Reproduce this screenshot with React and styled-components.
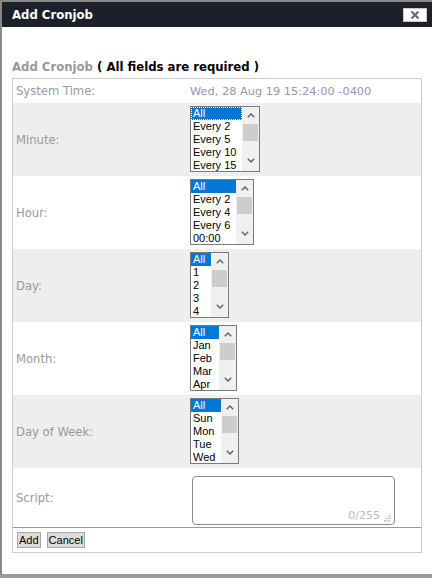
import React from "react";
import styled, { createGlobalStyle } from "styled-components";

const Global = createGlobalStyle`
  html, body {
    margin: 0;
    padding: 0;
    background: #9a9a9a;
  }
  body {
    font-family: "DejaVu Sans", Verdana, sans-serif;
  }
`;

const fields = [
	{ label: "Minute:", width: 70, items: ["All", "Every 2", "Every 5", "Every 10", "Every 15"], focus: true },
	{ label: "Hour:", width: 64, items: ["All", "Every 2", "Every 4", "Every 6", "00:00"] },
	{ label: "Day:", width: 39, items: ["All", "1", "2", "3", "4"] },
	{ label: "Month:", width: 47, items: ["All", "Jan", "Feb", "Mar", "Apr"] },
	{ label: "Day of Week:", width: 49, items: ["All", "Sun", "Mon", "Tue", "Wed"] },
];

const Chevron = ({ down }) => (
	<svg width="8" height="5" viewBox="0 0 8 5">
		<polyline
			points={down ? "0.8,0.8 4,4 7.2,0.8" : "0.8,4.2 4,1 7.2,4.2"}
			fill="none"
			stroke="#606060"
			strokeWidth="1.4"
		/>
	</svg>
);

const ListBox = ({ width, items, focus }) => (
	<Box $w={width}>
		<Options>
			{items.map((it, i) => (
				<Option key={it} $selected={i === 0} $focus={focus && i === 0}>
					{it}
				</Option>
			))}
		</Options>
		<ScrollBar>
			<Arrow>
				<Chevron />
			</Arrow>
			<Thumb />
			<Track />
			<Arrow $bottom>
				<Chevron down />
			</Arrow>
		</ScrollBar>
	</Box>
);

const App = () => {
	return (
		<>
			<Global />
			<Dialog>
				<TitleBar>
					<h1>Add Cronjob</h1>
					<CloseBtn aria-label="Close">
						<svg width="10" height="10" viewBox="0 0 10 10">
							<path d="M1.5 1.5 L8.5 8.5 M8.5 1.5 L1.5 8.5" stroke="#6b6b6b" strokeWidth="2.2" />
						</svg>
					</CloseBtn>
				</TitleBar>
				<Content>
					<Heading>
						<span>Add Cronjob</span> ( All fields are required )
					</Heading>
					<Table>
						<Row>
							<Label>System Time:</Label>
							<Value>Wed, 28 Aug 19 15:24:00 -0400</Value>
						</Row>
						{fields.map((f, i) => (
							<Row key={f.label} $shade={i % 2 === 0}>
								<Label>{f.label}</Label>
								<Field>
									<ListBox width={f.width} items={f.items} focus={f.focus} />
								</Field>
							</Row>
						))}
						<Row>
							<Label>Script:</Label>
							<Field $script>
								<ScriptWrap>
									<textarea />
									<Counter>
										0/255
										<svg width="7" height="7" viewBox="0 0 7 7">
											<rect x="5" y="0" width="1.4" height="1.4" fill="#aaa" />
											<rect x="2.5" y="2.6" width="1.4" height="1.4" fill="#aaa" />
											<rect x="5" y="2.6" width="1.4" height="1.4" fill="#aaa" />
											<rect x="0" y="5.2" width="1.4" height="1.4" fill="#aaa" />
											<rect x="2.5" y="5.2" width="1.4" height="1.4" fill="#aaa" />
											<rect x="5" y="5.2" width="1.4" height="1.4" fill="#aaa" />
										</svg>
									</Counter>
								</ScriptWrap>
							</Field>
						</Row>
						<Actions>
							<Button type="button">Add</Button>
							<Button type="button">Cancel</Button>
						</Actions>
					</Table>
				</Content>
			</Dialog>
		</>
	);
};

const Dialog = styled.div`
	width: 430px;
	background: #fff;
	border-top: 2px solid #888;
	border-left: 2px solid #888;
`;

const TitleBar = styled.div`
	height: 25px;
	background: #1d2028;
	display: flex;
	align-items: center;
	justify-content: space-between;
	padding: 0 5px 0 10px;
	h1 {
		margin: 0;
		color: #fff;
		font-size: 11.7px;
		font-weight: 700;
		line-height: 14px;
	}
`;

const CloseBtn = styled.button`
	width: 24px;
	height: 14px;
	margin-top: 1px;
	padding: 0;
	background: #fff;
	border: 1px solid #c8c8c8;
	display: flex;
	align-items: center;
	justify-content: center;
	cursor: pointer;
`;

const Content = styled.div`
	padding: 33px 9px 21px 10px;
`;

const Heading = styled.h2`
	margin: 0 0 4px;
	font-size: 11.7px;
	line-height: 14px;
	font-weight: 700;
	color: #000;
	span {
		color: #999;
	}
`;

const Table = styled.div`
	width: 408px;
	border: 1px solid #ccc;
`;

const Row = styled.div`
	display: grid;
	grid-template-columns: 174px 1fr;
	align-items: center;
	background: ${(p) => (p.$shade ? "#eee" : "#fff")};
`;

const Label = styled.div`
	padding: 0 3px;
	font-size: 11.6px;
	line-height: 14px;
	color: #999;
`;

const Value = styled.div`
	padding: 5px 3px;
	font-size: 11.35px;
	line-height: 14px;
	color: #9896a6;
`;

const Field = styled.div`
	padding: ${(p) => (p.$script ? "8px 3px 2px 5px" : "3px 3px 4px")};
	display: flex;
`;

const Box = styled.div`
	width: ${(p) => p.$w}px;
	height: 66px;
	box-sizing: border-box;
	border: 1px solid #7a7a7a;
	background: #fff;
	display: flex;
	overflow: hidden;
`;

const Options = styled.div`
	flex: 1;
	overflow: hidden;
	font-family: "Liberation Sans", Arial, sans-serif;
	font-size: 11px;
	color: #000;
`;

const Option = styled.div`
	height: 13px;
	line-height: 13px;
	padding-left: 2px;
	white-space: nowrap;
	background: ${(p) => (p.$selected ? "#0078d7" : "transparent")};
	color: ${(p) => (p.$selected ? "#fff" : "#000")};
	outline: ${(p) => (p.$focus ? "1px dotted #fff" : "none")};
	outline-offset: -1px;
`;

const ScrollBar = styled.div`
	width: 17px;
	background: #f0f0f0;
	display: flex;
	flex-direction: column;
`;

const Arrow = styled.div`
	height: 17px;
	display: flex;
	justify-content: center;
	align-items: ${(p) => (p.$bottom ? "flex-start" : "center")};
	padding-top: ${(p) => (p.$bottom ? "4px" : "0")};
	box-sizing: border-box;
`;

const Thumb = styled.div`
	height: 17px;
	margin: 0 1px;
	background: #cdcdcd;
`;

const Track = styled.div`
	flex: 1;
`;

const ScriptWrap = styled.div`
	position: relative;
	width: 203px;
	height: 49px;
	textarea {
		width: 100%;
		height: 100%;
		box-sizing: border-box;
		margin: 0;
		border: 1px solid #8a8a8a;
		border-radius: 4px;
		resize: none;
		background: #fff;
		display: block;
	}
`;

const Counter = styled.div`
	position: absolute;
	right: 4px;
	bottom: 3px;
	display: flex;
	align-items: flex-end;
	gap: 4px;
	font-size: 11px;
	line-height: 12px;
	color: #bbb;
`;

const Actions = styled.div`
	border-top: 1px solid #999;
	height: 25px;
	box-sizing: border-box;
	padding: 4px 4px 0;
	display: flex;
	align-items: flex-start;
	gap: 6px;
`;

const Button = styled.button`
	height: 16px;
	margin: 0;
	padding: 0 1px;
	font-family: "Liberation Sans", Arial, sans-serif;
	font-size: 11px;
	line-height: 14px;
	color: #000;
	background: #dcdcdc;
	border: 1px solid #a8a8a8;
	border-radius: 0;
	cursor: pointer;
`;

export default App;
